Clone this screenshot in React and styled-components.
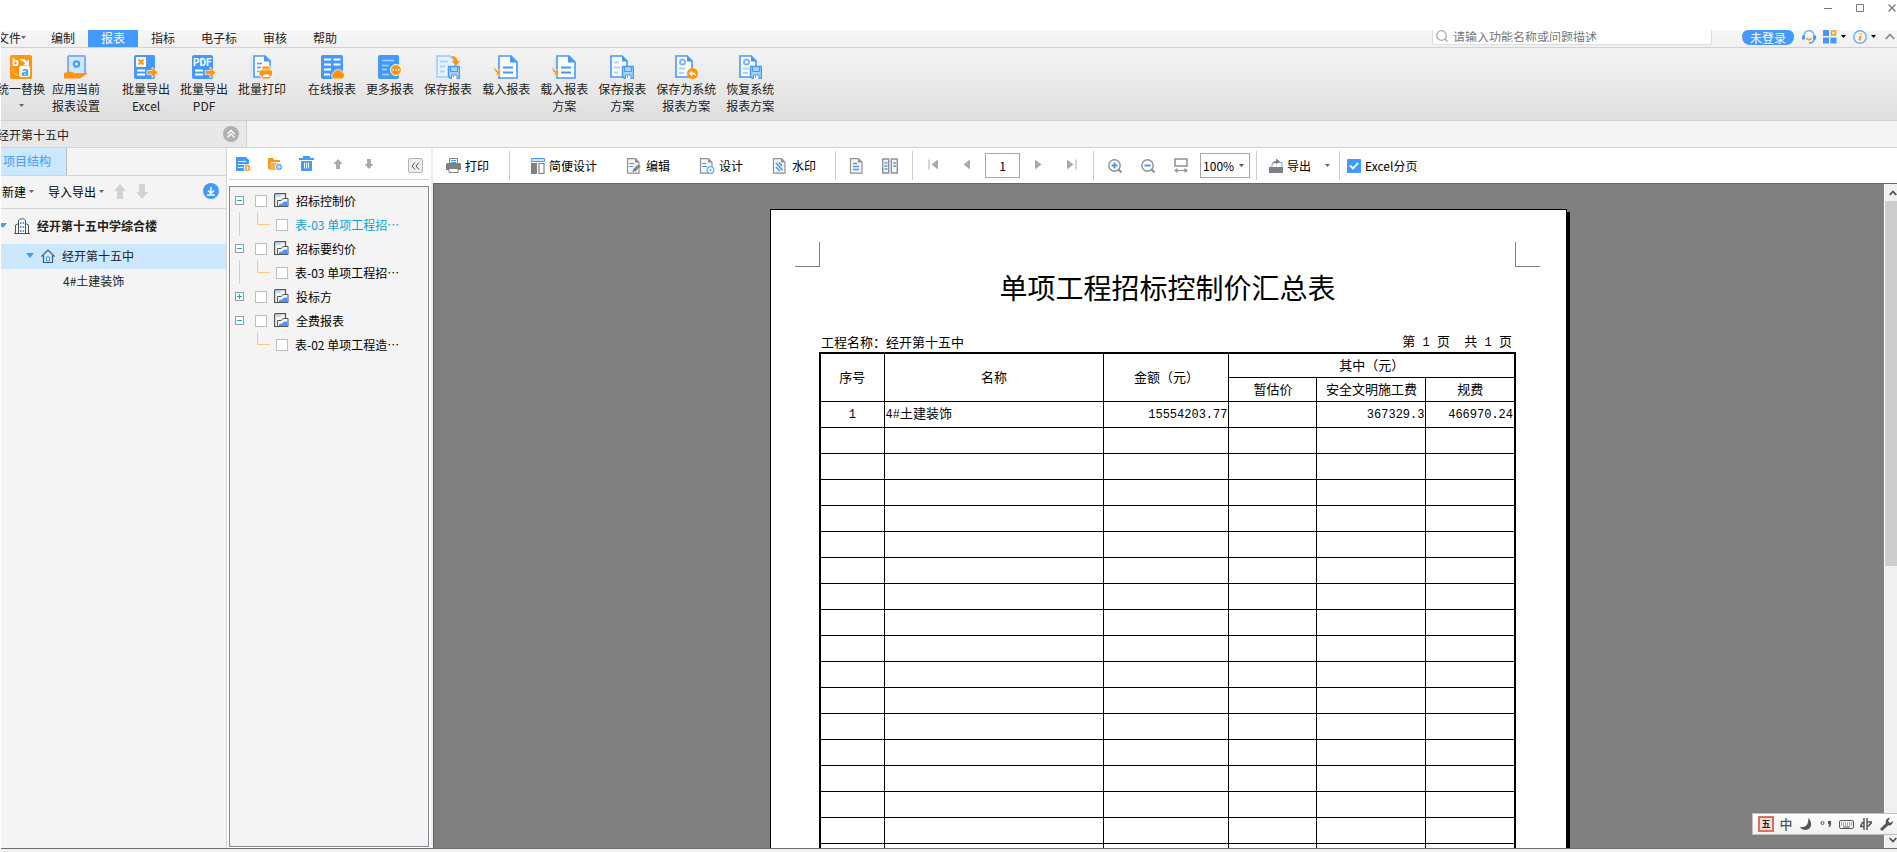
import React from "react";
import styled, { createGlobalStyle } from "styled-components";

const blue = "#4499ff";
const orange = "#ff9511";
const sky = "#a8d4ff";
const grey = "#808080";

const GlobalStyle = createGlobalStyle`
  * {
    box-sizing: border-box;
  }
  body {
    margin: 0;
    overflow: hidden;
    background: #fff;
  }
  body, button, input, select {
    font-family: "Noto Sans CJK SC", "Liberation Sans", sans-serif;
    font-size: 12px;
    color: #222;
  }
  button {
    padding: 0;
    border: 0;
    background: none;
    cursor: pointer;
  }
  svg {
    display: block;
    flex: none;
  }
`;

const Window = styled.div`
  height: 100vh;
  display: flex;
  flex-direction: column;
  padding-left: 1px;
  overflow: hidden;
  line-height: 17px;
`;

const TitleBar = styled.header`
  flex: none;
  height: 30px;
  display: flex;
  justify-content: flex-end;
  align-items: flex-start;
  gap: 24px;
  padding-top: 4px;
`;

const MenuBar = styled.nav`
  flex: none;
  height: 18px;
  display: flex;
  background: linear-gradient(#f8f8f8, #f0f0f0);
  border-bottom: 1px solid #d2d2d2;
  overflow: hidden;
`;

const MenuItem = styled.button`
  height: 17px;
  padding: 0 13px 2px;
  line-height: 15px;
  white-space: nowrap;
  display: flex;
  align-items: center;
  color: ${({ $active }) => ($active ? "#fff" : "#222")};
  background: ${({ $active }) => ($active ? blue : "transparent")};

  &:first-child {
    margin-left: -17px;
    padding-right: 12px;
  }
`;

const MenuTools = styled.div`
  margin-left: auto;
  display: flex;
  align-items: center;
  height: 15px;
  padding-right: 2px;
`;

const SearchBox = styled.label`
  width: 280px;
  height: 15px;
  display: flex;
  align-items: flex-start;
  gap: 5px;
  padding-left: 3px;
  margin-right: 30px;
  background: #fff;
  border: 1px solid #ddd;
  border-top: 0;
  border-radius: 0 0 3px 3px;
`;

const SearchInput = styled.input`
  flex: 1;
  min-width: 0;
  height: 12px;
  padding: 0;
  border: 0;
  outline: 0;
  background: transparent;

  &::placeholder {
    color: #777;
    opacity: 1;
  }
`;

const LoginButton = styled.button`
  width: 52px;
  height: 15px;
  line-height: 13px;
  margin-right: 8px;
  color: #fff;
  background: ${blue};
  border-radius: 6px 6px 8px 8px;
`;

const StatusButton = styled.button`
  display: flex;
  align-items: center;
  gap: 4px;
  margin-right: ${({ $gap }) => $gap}px;
  padding-bottom: 2px;
`;

const Ribbon = styled.div`
  flex: none;
  height: 73px;
  display: flex;
  gap: 22px;
  background: linear-gradient(#f4f4f4, #dfdfdf);
  border-bottom: 1px solid #cecece;
`;

const RibbonGroup = styled.div`
  display: flex;
  gap: 10px;

  &:first-child {
    gap: 7px;
    margin-left: -4px;
  }
`;

const RibbonItem = styled.button`
  display: flex;
  flex-direction: column;
  align-items: center;
  padding-top: 7px;
  white-space: nowrap;

  span {
    margin-top: 1px;
    line-height: 17px;
  }
  svg + span + svg {
    margin-top: 7px;
  }
`;

const DocBar = styled.div`
  flex: none;
  height: 27px;
  background: #f4f4f4;
  border-bottom: 1px solid #d4d4d4;
`;

const DocTab = styled.div`
  width: 246px;
  height: 26px;
  display: flex;
  align-items: center;
  justify-content: space-between;
  padding-right: 7px;
  background: #e8e8e8;
  border-right: 1px solid #d4d4d4;

  span {
    margin-left: -4px;
  }
`;

const Body = styled.main`
  flex: 1;
  min-height: 0;
  display: flex;
  border-bottom: 1px solid #707070;
`;

const Footer = styled.footer`
  flex: none;
  height: 3px;
  background: #f0f0f0;
`;

const ProjectPanel = styled.aside`
  flex: none;
  width: 226px;
  overflow: hidden;
  background: #f4f4f4;
  border-right: 1px solid #d4d4d4;
`;

const PanelTabs = styled.div`
  height: 28px;
  display: flex;
  border-bottom: 1px solid #d4d4d4;
`;

const PanelTab = styled.button`
  width: 66px;
  padding: 0 15px 2px 2px;
  color: ${blue};
  background: #cce8ff;
  border-right: 1px solid #bbb;
`;

const PanelTools = styled.div`
  height: 33px;
  display: flex;
  align-items: center;
  padding: 0 7px 2px 1px;
  border-bottom: 1px solid #d4d4d4;
`;

const DropButton = styled.button`
  display: flex;
  align-items: center;
  gap: 3px;
  margin-right: ${({ $gap }) => $gap || 0}px;
  color: #000;
`;

const PlainButton = styled.button`
  display: flex;
  margin-left: ${({ $push }) => ($push ? "auto" : "0")};
`;

const ProjectTree = styled.ul`
  list-style: none;
  margin: 0;
  padding: 0;
`;

const ProjectRow = styled.li`
  height: ${({ $root }) => ($root ? 35 : 25)}px;
  display: flex;
  align-items: center;
  gap: 7px;
  margin-left: ${({ $root }) => ($root ? -2 : 0)}px;
  padding: 0 0 2px ${({ $indent }) => $indent}px;
  font-weight: ${({ $root }) => ($root ? "bold" : "normal")};
  background: ${({ $active }) => ($active ? "#cce8ff" : "transparent")};
`;

const ReportPanel = styled.aside`
  flex: none;
  width: 204px;
  display: flex;
  flex-direction: column;
  padding: 0 2px 1px 2px;
  background: #fff;
`;

const ReportTools = styled.div`
  flex: none;
  height: 32px;
  display: flex;
  align-items: center;
  padding: 0 6px 0 7px;
  border-bottom: 1px solid #d4d4d4;
`;

const ReportToolSet = styled.div`
  flex: 1;
  display: flex;
  align-items: center;
  gap: 16px;
`;

const CollapseButton = styled.button`
  width: 15px;
  height: 15px;
  display: flex;
  align-items: center;
  justify-content: center;
  margin-top: 4px;
  background: #eee;
  border: 1px solid #b4b4b4;
  border-radius: 2px;
`;

const ReportTree = styled.ul`
  flex: 1;
  list-style: none;
  margin: 6px 0 0;
  padding: 1px 0 0 5px;
  color: #000;
  background: #f4f4f4;
  border: 1px solid #83878f;
`;

const ReportRow = styled.li`
  height: 24px;
  display: flex;
  align-items: center;

  label {
    display: flex;
    align-items: center;
    white-space: nowrap;
    gap: 7px;
    color: ${({ $active }) => ($active ? "#0aa2dc" : "#000")};
  }
  label input {
    margin: 2px 0 0;
  }
`;

const Expander = styled.button`
  width: 9px;
  height: 9px;
  margin: 0 11px 0 0;
  border: 1px solid #999;
  background: #fff;
`;

const TickBox = styled.input.attrs({ type: "checkbox" })`
  appearance: none;
  flex: none;
  width: 12px;
  height: 12px;
  background: #fff;
  border: 1px solid #bdbdbd;
`;

const Viewer = styled.section`
  flex: 1;
  min-width: 0;
  display: flex;
  flex-direction: column;
  border-left: 2px solid #ececec;
`;

const Toolbar = styled.div`
  flex: none;
  height: 35px;
  display: flex;
  align-items: center;
  background: #fff;
  white-space: nowrap;
`;

const ToolGroup = styled.div`
  height: 29px;
  display: flex;
  align-items: center;
  gap: ${({ $gap }) => $gap || 0}px;
  padding: 0 ${({ $right }) => $right}px 0 ${({ $left }) => $left}px;

  & + & {
    border-left: 1px solid #ccc;
  }
`;

const PageSteps = styled.div`
  display: flex;
  align-items: center;
  gap: 25px;
  padding-bottom: 2px;
`;

const ToolButton = styled.button`
  display: flex;
  align-items: center;
  gap: ${({ $gap }) => $gap || 4}px;
  color: #000;
`;

const PageInput = styled.input`
  width: 35px;
  height: 25px;
  padding: 0;
  text-align: center;
  color: #000;
  border: 1px solid #a8a8a8;
`;

const ZoomField = styled.div`
  position: relative;

  svg {
    position: absolute;
    right: 6px;
    top: 11px;
    pointer-events: none;
  }
`;

const ZoomSelect = styled.select`
  appearance: none;
  width: 50px;
  height: 25px;
  padding: 0 0 0 2px;
  color: #000;
  background: #fff;
  border: 1px solid #a8a8a8;
`;

const ExcelCheck = styled.label`
  display: flex;
  align-items: center;
  gap: 4px;
  color: #000;
`;

const ExcelTick = styled.span`
  display: grid;

  input,
  svg {
    grid-area: 1 / 1;
  }
  input {
    appearance: none;
    width: 14px;
    height: 14px;
    margin: 0;
    border-radius: 1px;
    background: ${blue};
  }
  svg {
    pointer-events: none;
  }
`;

const Canvas = styled.div`
  flex: 1;
  min-height: 0;
  display: flex;
  background: ${grey};
  border-top: 1px solid #666;
  border-left: 1px solid #666;
`;

const PageArea = styled.div`
  flex: 1;
  min-width: 0;
  display: flex;
  justify-content: center;
  align-items: flex-start;
  padding: 25px 0 0 19px;
  overflow: hidden;
`;

const Page = styled.article`
  width: 797px;
  min-height: 1123px;
  padding-top: 32px;
  color: #000;
  background: #fff;
  border: 1px solid #000;
  box-shadow: 3px 3px 0 #000;
`;

const CropMarks = styled.div`
  display: flex;
  justify-content: space-between;
  padding: 0 26px 0 24px;
`;

const CropMark = styled.span`
  width: 25px;
  height: 25px;
  border-bottom: 1px solid ${grey};
  border-right: ${({ $side }) => ($side === "left" ? `1px solid ${grey}` : "0")};
  border-left: ${({ $side }) => ($side === "right" ? `1px solid ${grey}` : "0")};
`;

const Sheet = styled.div`
  padding: 0 50px 0 48px;
  font-size: 13px;
`;

const SheetTitle = styled.h1`
  margin: 0 0 24px;
  text-align: center;
  font-size: 28px;
  line-height: 40px;
  font-weight: 400;
`;

const SheetInfo = styled.div`
  height: 21px;
  display: flex;
  justify-content: space-between;
  align-items: center;
  padding: 0 4px 0 2px;
`;

const Num = styled.span`
  font-family: "Liberation Mono", monospace;
  font-size: 12px;
  white-space: pre;
`;

const SummaryTable = styled.table`
  width: 100%;
  table-layout: fixed;
  border-collapse: collapse;
  border: 2px solid #000;
  line-height: 18px;

  th,
  td {
    padding: 0 1px;
    border: 1px solid #000;
    font-weight: 400;
    white-space: nowrap;
  }
  thead tr {
    height: 24px;
  }
  tbody tr {
    height: 26px;
  }
`;

const Cell = styled.td`
  text-align: ${({ $align }) => $align || "left"};
`;

const Col = styled.col`
  width: ${({ $width }) => $width}px;
`;

const ScrollBar = styled.div`
  flex: none;
  width: 13px;
  display: flex;
  flex-direction: column;
  background: #f0f0f0;
  border-left: 1px solid #fff;
`;

const ScrollButton = styled.button`
  flex: none;
  height: 17px;
  display: flex;
  align-items: center;
  justify-content: center;
  padding-left: 3px;
`;

const ScrollTrack = styled.div`
  flex: 1;
`;

const ScrollThumb = styled.div`
  height: 58%;
  background: #cdcdcd;
`;

const ImeBar = styled.div`
  position: absolute;
  right: 0;
  bottom: 17px;
  width: 145px;
  height: 22px;
  display: flex;
  align-items: center;
  justify-content: space-between;
  padding: 0 3px 0 5px;
  background: linear-gradient(#fff, #f0f0f2);
  border: 1px solid #c0bcbc;
  border-right: 0;
`;

const ImeKey = styled.button`
  width: 16px;
  display: flex;
  justify-content: center;
  color: #555;
  font-size: 13px;
  font-weight: 500;
  line-height: 18px;
`;

const ImeBadge = styled(ImeKey)`
  height: 16px;
  align-items: center;
  line-height: 10px;
  font-size: 9px;
  font-weight: bold;
  color: #222;
  background: #f3dcd8;
  border: 2px double #d9705f;
`;

const Caret = ({ color = "#666" }) => (
  <svg width="5" height="3" viewBox="0 0 5 3">
    <path d="M0 0h5L2.5 3z" fill={color} />
  </svg>
);

const Icon = ({ w = 16, h = w, children }) => (
  <svg width={w} height={h} viewBox={`0 0 ${w} ${h}`} fill="none">
    {children}
  </svg>
);

/* ribbon icons, all on a 24px grid */

const Floppy = () => (
  <>
    <path d="M12.5 11.5h11v12h-9l-2-2z" fill={sky} stroke={blue} strokeWidth="1.5" />
    <path d="M14.5 11.5v5h7v-5" stroke={blue} />
    <path d="M15.500 24v-4h5.500v4" fill="#fff" stroke={blue} />
    <path d="M17.500 20.500v2" stroke={blue} />
  </>
);

const ReplaceIcon = () => (
  <Icon w={24}>
    <rect x="1" width="22" height="24" rx="2" fill={orange} />
    <text x="3" y="11" fontSize="11" fontWeight="bold" fill="#fff" fontFamily="Open Sans">b</text>
    <path d="M10 4.500c3-1.500 6-.5 8 2l2-2v6h-6l2-2c-1-2-3-3-6-4z" fill="#fff" />
    <rect x="10" y="11" width="11" height="11" rx="2" fill="#fff" />
    <text x="12" y="21" fontSize="13" fontWeight="bold" fill={blue} fontFamily="Open Sans">a</text>
    <path d="M4 14c0 4 1 5 5 6" stroke="#ffc880" />
  </Icon>
);

const ApplyIcon = () => (
  <Icon w={24}>
    <rect x="4" y="1" width="17" height="18" rx="1" fill="#cfe7ff" stroke="#73b4ff" strokeWidth="2" />
    <circle cx="12.500" cy="9" r="2.700" stroke={blue} strokeWidth="2" />
    <path d="M0 18l5-1.500 4 .5 1.500 2h4l1 .8 7-2 1 1-7.500 4.700H0z" fill={orange} />
  </Icon>
);

const ExportIcon = ({ label }) => (
  <Icon w={24}>
    <rect width="21" height="24" rx="2" fill={blue} />
    {label ? (
      <text x="1" y="11" fontSize="10" fontWeight="bold" fill="#fff" fontFamily="Roboto">PDF</text>
    ) : (
      <>
        <rect x="2" y="2" width="10" height="10" rx="1" fill="#fff" />
        <path d="M4.500 4.500l5 5M9.500 4.500l-5 5" stroke={orange} strokeWidth="2" />
      </>
    )}
    <path d="M3 15.500h8M3 19.500h8" stroke="#fff" strokeWidth="2" />
    <path d="M13 15.500h5V12l6 5.500-6 5.500v-3.500h-5z" fill={orange} stroke="#fff" strokeWidth=".6" />
  </Icon>
);

const BatchPrintIcon = () => (
  <Icon w={24}>
    <path d="M1 2v20h3" stroke="#d6eaff" strokeWidth="2" />
    <path d="M4 1h11l5 5v16H4z" fill="#fff" stroke={blue} strokeWidth="1.600" />
    <path d="M14 .5v6h6z" fill={blue} />
    <path d="M7 8.500h5M7 12.500h4M7 16.500h3" stroke={blue} strokeWidth="1.600" />
    <path d="M12 11h8v4h2.500v6H20v3h-8v-3H9v-6h3z" fill={orange} stroke="#fff" strokeWidth=".8" />
    <path d="M13 13.500h6v2h-6z" fill="#ffca86" />
    <path d="M13 19.500h6v2.500h-6z" fill="#fff" />
  </Icon>
);

const OnlineIcon = () => (
  <Icon w={24}>
    <rect x="1" width="22" height="24" rx="2" fill={blue} />
    <path d="M4 4.500h7M13.500 4.500h7M4 9.500h7M13.500 9.500h7M4 14.500h7M4 19.500h6" stroke="#fff" strokeWidth="2" />
    <path d="M14 24a3.500 3.500 0 0 1-.5-6.500 5 5 0 0 1 8.500-1 4 4 0 0 1 0 7.500z" fill={orange} stroke="#fff" strokeWidth=".8" />
  </Icon>
);

const MoreIcon = () => (
  <Icon w={24}>
    <rect width="21" height="24" rx="2" fill={blue} />
    <path d="M4 5.500h12M4 10.500h7M4 14.500h5M4 19.500h7" stroke="#a8d4ff" strokeWidth="1.600" />
    <circle cx="18" cy="15" r="5.500" fill={orange} stroke="#fff" />
    <path d="M14.500 15h1.500M17.300 15h1.500M20 15h1.500" stroke="#fff" strokeWidth="1.600" />
  </Icon>
);

const SaveIcon = () => (
  <Icon w={24}>
    <path d="M1 1h13l5 5v16H1z" fill="#e6f3ff" stroke={sky} strokeWidth="2" />
    <path d="M4 6.500h8M4 11.500h5M4 16.500h5" stroke={sky} strokeWidth="2" />
    <path d="M15 1c4 0 6 1 6.500 5H24l-4 5-4.500-5H18c0-2-1-3-3-5z" fill={orange} />
    <Floppy />
  </Icon>
);

const LoadIcon = ({ pale }) => (
  <Icon w={24}>
    {pale && <path d="M1 2h5v20H2V2" fill="#d6eaff" />}
    <path d="M5 1h12l6 6v16H5z" fill="#fff" stroke={blue} strokeWidth="1.600" />
    <path d="M16 .5v7h7z" fill={blue} />
    <path d="M9 12.500h10M9 17.500h10" stroke={blue} strokeWidth="1.800" />
    <path d="M.5 10c0 3 1.500 5 4 6l2-2.500V20H1l2-2C0 16.500-.5 13 .5 10z" fill={orange} stroke="#fff" strokeWidth=".6" />
  </Icon>
);

const SavePlanIcon = () => (
  <Icon w={24}>
    <path d="M1 1h11l5 5v16H1z" fill="#fff" stroke={blue} strokeWidth="1.600" />
    <path d="M12 .5v6h6z" fill={blue} />
    <path d="M4 7.500h5M4 12.500h6M4 17.500h4" stroke={sky} strokeWidth="2" />
    <Floppy />
  </Icon>
);

const SystemIcon = ({ restore }) => (
  <Icon w={24}>
    <path d="M2 1h11l5 5v16H2z" fill="#fff" stroke={blue} strokeWidth="1.600" />
    <path d="M13 .5v6h6z" fill={blue} />
    <circle cx="8.500" cy="7" r="2.500" stroke="#79b7ff" strokeWidth="2" />
    <path d="M5 13.500h6M5 18h5" stroke={sky} strokeWidth="2" />
    {restore ? (
      <Floppy />
    ) : (
      <>
        <circle cx="18.500" cy="18.500" r="5.500" fill={orange} />
        <path d="M14.500 18.500l3.500-3v2c3 0 4 1.500 4 4-1-1.500-2-2-4-2v2z" fill="#fff" />
      </>
    )}
  </Icon>
);

/* panel and toolbar icons */

const PrinterIcon = () => (
  <Icon w={15} h={16}>
    <path d="M3.500 5V.5h8V5" fill="#fff" stroke={grey} />
    <path d="M5 2.500h5M5 4.500h5" stroke={blue} />
    <path d="M1 5h13l1 1v6H0V6z" fill={grey} />
    <path d="M3 10.500h9v4H3z" fill="#fff" stroke={grey} />
  </Icon>
);

const SimpleDesignIcon = () => (
  <Icon w={14} h={16}>
    <path d="M.5.5h13v3H.5z" fill="#cfe7ff" stroke={blue} />
    <path d="M0 5h6v11H0z" fill={grey} />
    <path d="M8 5.500h5v10H8z" stroke={grey} strokeWidth="1.200" />
  </Icon>
);

const PaperIcon = ({ kind }) => (
  <Icon w={16}>
    <path d="M1.500.7h8l3.500 3.500v11H1.500z" fill="#f7f7f7" stroke="#909090" strokeWidth="1.200" />
    <path d="M9 .5v4h4z" fill="#909090" />
    {kind === "edit" && (
      <>
        <path d="M3 5.500h5M3 8.500h4" stroke={blue} />
        <path d="M6 14.500l1-3.500 5.500-5 2.500 2.500-5.500 5z" fill={grey} stroke="#fff" strokeWidth=".5" />
      </>
    )}
    {kind === "design" && (
      <>
        <path d="M3 5.500h4M3 8.500h5" stroke={blue} />
        <circle cx="11.500" cy="12" r="3.300" fill="#fff" stroke="#66adff" strokeWidth="1.300" />
        <circle cx="11.500" cy="12" r="1" fill={blue} />
      </>
    )}
    {kind === "mark" && (
      <path d="M4 5l6.500 7M7 4.500l3 3.500M4 9l4 4" stroke={blue} strokeWidth="1.600" />
    )}
    {kind === "text" && <path d="M4 5.500h4M4 8.500h6M4 11.500h6" stroke={blue} strokeWidth="1.500" />}
  </Icon>
);

const TwoPageIcon = () => (
  <Icon w={16}>
    <path d="M.7 1h6v14h-6zM9.300 1h6v14h-6z" fill="#f7f7f7" stroke="#909090" strokeWidth="1.400" />
    <path d="M2.500 5h3M2.500 8h3M2.500 11h3M11 5h3M11 8h3" stroke={blue} strokeWidth="1.300" />
  </Icon>
);

const StepIcon = ({ back, end }) => (
  <svg width={end ? 10 : 7} height="11" viewBox={end ? "0 0 10 11" : "0 0 7 11"}>
    <g transform={back ? `translate(${end ? 10 : 7} 0) scale(-1 1)` : undefined} fill="#aaa">
      <path d="M0 .5l6.500 5L0 10.500z" />
      {end && <path d="M8.500.5h1v10h-1z" />}
    </g>
  </svg>
);

const ZoomIcon = ({ plus }) => (
  <Icon w={14}>
    <circle cx="6.500" cy="6.500" r="5.700" stroke="#909090" strokeWidth="1.400" />
    <path d="M10.500 10.500l3 3" stroke="#909090" strokeWidth="2" />
    <path d={plus ? "M3.500 6.500h6M6.500 3.500v6" : "M3.500 6.500h6"} stroke={blue} strokeWidth="2" />
  </Icon>
);

const FitWidthIcon = () => (
  <Icon w={14} h={15}>
    <path d="M1 1h12v7H1z" stroke="#909090" strokeWidth="1.500" />
    <path d="M0 12.500l3.500-2.500v2h7v-2l3.500 2.500-3.500 2.500v-2h-7v2z" fill="#909090" />
  </Icon>
);

const ExportTrayIcon = () => (
  <Icon w={14} h={15}>
    <path d="M9 4.500h4v5H3V6" stroke="#66adff" />
    <path d="M0 9h14v6H0z" fill={grey} />
    <path d="M3 7c0-3 2-4 4-4V.5l4 3-4 3V5C5 5 4 5.500 3 7z" fill={grey} />
  </Icon>
);

const FolderIcon = () => (
  <Icon w={15} h={14}>
    <path d="M11.500 5V.6H1.500L.6 1.500v12h12" stroke="#555" strokeWidth="1.200" />
    <path d="M2.500 2h4v2h-4z" fill={sky} />
    <path d="M3.500 13.500V7.500h4L9 5.500h5v8H.6" fill="#fff" stroke="#555" />
    <path d="M5 13v-2l3-.5L10 8.500h3.500V13z" fill={blue} />
  </Icon>
);

const NewReportIcon = () => (
  <Icon w={16}>
    <path d="M0 1h10l3 3v11H0z" fill={blue} />
    <path d="M2 5.500h8M2 8.500h7M2 11.500h5" stroke="#fff" />
    <circle cx="11.500" cy="12" r="3.500" fill={orange} stroke="#fff" />
    <path d="M9.500 12h4M11.500 10v4" stroke="#fff" />
  </Icon>
);

const NewFolderIcon = () => (
  <Icon w={15} h={14}>
    <path d="M0 1h5l1 2h6v2H3l-1 7H0z" fill={orange} />
    <path d="M3 6h10l-1 7H1z" fill="#ffb04a" />
    <circle cx="11" cy="10" r="3.500" fill={blue} stroke="#fff" />
    <path d="M9 10h4M11 8v4" stroke="#fff" />
  </Icon>
);

const TrashIcon = () => (
  <Icon w={15} h={16}>
    <path d="M0 2h4V0h7v2h4v2H0zM2 5h11v10H2z" fill={blue} />
    <path d="M5.500 6.500v6M7.500 6.500v6M9.500 6.500v6" stroke="#fff" strokeWidth=".9" />
  </Icon>
);

const BuildingIcon = () => (
  <Icon w={16}>
    <path d="M1.500 15V7l3-1.500M14.500 15V7l-3-1.500M0 15.500h16" stroke="#555" />
    <path d="M4.500 15V2.500L7 .8h2.500l2 1.700V15" fill="#fff" stroke="#555" />
    <path d="M6 4h1.500v2H6zM8.700 4h1.500v2H8.700zM6 8h1.500v2H6zM8.700 8h1.500v2H8.700zM6 12h1.500v2H6zM8.700 12h1.500v2H8.700z" fill={blue} />
  </Icon>
);

const HouseIcon = () => (
  <Icon w={14}>
    <path d="M.5 7.500L7 1l6.500 6.500M2.500 6.500v7h9v-7" stroke="#3f5a73" strokeWidth="1.200" />
    <path d="M5.500 8h3v4h-3z" fill="#e8f4ff" stroke={blue} />
  </Icon>
);

const TreeArrow = () => (
  <Icon w={8} h={5}>
    <path d="M0 0h8L4 5z" fill={blue} />
  </Icon>
);

const ribbonGroups = [
  [
    { icon: <ReplaceIcon />, lines: ["统一替换"], drop: true },
    { icon: <ApplyIcon />, lines: ["应用当前", "报表设置"] },
  ],
  [
    { icon: <ExportIcon />, lines: ["批量导出", "Excel"] },
    { icon: <ExportIcon label="PDF" />, lines: ["批量导出", "PDF"] },
    { icon: <BatchPrintIcon />, lines: ["批量打印"] },
  ],
  [
    { icon: <OnlineIcon />, lines: ["在线报表"] },
    { icon: <MoreIcon />, lines: ["更多报表"] },
    { icon: <SaveIcon />, lines: ["保存报表"] },
    { icon: <LoadIcon />, lines: ["载入报表"] },
    { icon: <LoadIcon pale />, lines: ["载入报表", "方案"] },
    { icon: <SavePlanIcon />, lines: ["保存报表", "方案"] },
    { icon: <SystemIcon />, lines: ["保存为系统", "报表方案"] },
    { icon: <SystemIcon restore />, lines: ["恢复系统", "报表方案"] },
  ],
];

const menus = ["编制", "报表", "指标", "电子标", "审核", "帮助"];

const reports = [
  { name: "招标控制价", open: true, child: "表-03 单项工程招…", active: true, more: true },
  { name: "招标要约价", open: true, child: "表-03 单项工程招…", more: true },
  { name: "投标方", open: false },
  { name: "全费报表", open: true, child: "表-02 单项工程造…" },
];

const emptyRows = Array.from({ length: 22 }, (_, i) => i);

const MenuSection = () => (
  <MenuBar>
    <MenuItem>
      文件
      <Caret />
    </MenuItem>
    {menus.map((name) => (
      <MenuItem key={name} $active={name === "报表"}>
        {name}
      </MenuItem>
    ))}
    <MenuTools>
      <SearchBox>
        <Icon w={12}>
          <circle cx="5.500" cy="5.500" r="4.800" stroke="#aaa" strokeWidth="1.300" />
          <path d="M9 9l2.500 2.500" stroke="#aaa" strokeWidth="1.500" />
        </Icon>
        <SearchInput aria-label="搜索" placeholder="请输入功能名称或问题描述" />
      </SearchBox>
      <LoginButton>未登录</LoginButton>
      <StatusButton $gap={7} aria-label="客服">
        <Icon w={14}>
          <path d="M2 7V5.500C3-.8 11-.8 12 5.500V7" stroke="#73b4ff" strokeWidth="1.500" />
          <path d="M0 5.500h3v4H0zM11 5.500h3v4h-3z" fill={blue} />
          <path d="M4.500 8c1 2.500 4 2.500 5 0" stroke={orange} strokeWidth="1.600" />
          <path d="M12 9c0 3-2 4-5 4" stroke={blue} strokeWidth="1.500" />
        </Icon>
      </StatusButton>
      <StatusButton $gap={7} aria-label="应用">
        <Icon w={14}>
          <path d="M0 0h6v6H0zM0 7.500h6v6H0zM7.500 7.500h6v6h-6z" fill={blue} />
          <path d="M8.500 1h4v4h-4z" stroke={orange} strokeWidth="1.500" />
        </Icon>
        <Caret color="#000" />
      </StatusButton>
      <StatusButton $gap={9} aria-label="帮助">
        <Icon w={14}>
          <circle cx="7" cy="7" r="6.200" stroke="#66adff" strokeWidth="1.400" />
          <path d="M7.500 6l-1 4.500M7.900 3.300l-.2 1.200" stroke={orange} strokeWidth="2" />
        </Icon>
        <Caret color="#000" />
      </StatusButton>
      <StatusButton $gap={0} aria-label="收起">
        <Icon w={10} h={7}>
          <path d="M.7 6L5 1.500 9.300 6" stroke="#888" strokeWidth="1.800" />
        </Icon>
      </StatusButton>
    </MenuTools>
  </MenuBar>
);

const ProjectSection = () => (
  <ProjectPanel>
    <PanelTabs>
      <PanelTab>项目结构</PanelTab>
    </PanelTabs>
    <PanelTools>
      <DropButton $gap={14}>
        新建
        <Caret />
      </DropButton>
      <DropButton $gap={10}>
        导入导出
        <Caret />
      </DropButton>
      <DropButton $gap={10} aria-label="上移">
        <Icon w={12} h={15}>
          <path d="M6 0l6 7H9v8H3V7H0z" fill="#d2d2d2" />
        </Icon>
      </DropButton>
      <DropButton aria-label="下移">
        <Icon w={12} h={15}>
          <path d="M3 0h6v8h3l-6 7-6-7h3z" fill="#d2d2d2" />
        </Icon>
      </DropButton>
      <PlainButton $push aria-label="下载">
        <Icon w={16}>
          <circle cx="8" cy="8" r="8" fill={blue} />
          <path d="M8 4v6M5 7.500l3 3 3-3M4 12h8" stroke="#fff" strokeWidth="1.400" />
        </Icon>
      </PlainButton>
    </PanelTools>
    <ProjectTree>
      <ProjectRow $root $indent={0}>
        <TreeArrow />
        <BuildingIcon />
        经开第十五中学综合楼
      </ProjectRow>
      <ProjectRow $active $indent={25}>
        <TreeArrow />
        <HouseIcon />
        经开第十五中
      </ProjectRow>
      <ProjectRow $indent={62}>4#土建装饰</ProjectRow>
    </ProjectTree>
  </ProjectPanel>
);

const ReportSection = () => (
  <ReportPanel>
    <ReportTools>
      <ReportToolSet>
        <PlainButton aria-label="新建报表">
          <NewReportIcon />
        </PlainButton>
        <PlainButton aria-label="新建文件夹">
          <NewFolderIcon />
        </PlainButton>
        <PlainButton aria-label="删除">
          <TrashIcon />
        </PlainButton>
        <PlainButton aria-label="上移">
          <Icon w={15} h={10}>
            <path d="M8 0l4.500 5H10v5H6V5H3.500z" fill="#aaa" />
          </Icon>
        </PlainButton>
        <PlainButton aria-label="下移">
          <Icon w={15} h={10}>
            <path d="M6 0h4v5h2.500L8 10 3.500 5H6z" fill="#aaa" />
          </Icon>
        </PlainButton>
      </ReportToolSet>
      <CollapseButton aria-label="折叠">
        <Icon w={9} h={8}>
          <path d="M4 .5L1 4l3 3.500M8 .5L5 4l3 3.500" stroke="#555" />
        </Icon>
      </CollapseButton>
    </ReportTools>
    <ReportTree>
      {reports.map((group) => (
        <React.Fragment key={group.name}>
          <ReportRow>
            <Expander aria-label={group.open ? "收起" : "展开"}>
              <Icon w={7}>
                <path d={group.open ? "M1 3.500h5" : "M1 3.500h5M3.500 1v5"} stroke="#1aa5d8" />
              </Icon>
            </Expander>
            <label>
              <TickBox />
              <FolderIcon />
              {group.name}
            </label>
          </ReportRow>
          {group.child && (
            <ReportRow $active={group.active}>
              <Icon w={41} h={24}>
                {group.more && <path d="M4.500 0v24" stroke="#ffc880" />}
                <path d="M22.500 0v12.500H35" stroke="#ffc880" />
              </Icon>
              <label>
                <TickBox />
                {group.child}
              </label>
            </ReportRow>
          )}
        </React.Fragment>
      ))}
    </ReportTree>
  </ReportPanel>
);

const ViewerToolbar = () => (
  <Toolbar>
    <ToolGroup $left={13} $right={20}>
      <ToolButton>
        <PrinterIcon />
        打印
      </ToolButton>
    </ToolGroup>
    <ToolGroup $left={21} $right={19} $gap={29}>
      <ToolButton>
        <SimpleDesignIcon />
        简便设计
      </ToolButton>
      <ToolButton>
        <PaperIcon kind="edit" />
        编辑
      </ToolButton>
      <ToolButton>
        <PaperIcon kind="design" />
        设计
      </ToolButton>
      <ToolButton>
        <PaperIcon kind="mark" />
        水印
      </ToolButton>
    </ToolGroup>
    <ToolGroup $left={13} $right={14} $gap={17}>
      <ToolButton aria-label="单页">
        <PaperIcon kind="text" />
      </ToolButton>
      <ToolButton aria-label="双页">
        <TwoPageIcon />
      </ToolButton>
    </ToolGroup>
    <ToolGroup $left={15} $right={16} $gap={15}>
      <PageSteps>
        <ToolButton aria-label="首页">
          <StepIcon back end />
        </ToolButton>
        <ToolButton aria-label="上一页">
          <StepIcon back />
        </ToolButton>
      </PageSteps>
      <PageInput aria-label="页码" defaultValue="1" />
      <PageSteps>
        <ToolButton aria-label="下一页">
          <StepIcon />
        </ToolButton>
        <ToolButton aria-label="末页">
          <StepIcon end />
        </ToolButton>
      </PageSteps>
    </ToolGroup>
    <ToolGroup $left={14} $right={6} $gap={19}>
      <ToolButton aria-label="放大">
        <ZoomIcon plus />
      </ToolButton>
      <ToolButton aria-label="缩小">
        <ZoomIcon />
      </ToolButton>
      <ToolGroup $left={0} $right={0} $gap={12} as="span">
        <ToolButton aria-label="适合宽度">
          <FitWidthIcon />
        </ToolButton>
        <ZoomField>
          <ZoomSelect aria-label="缩放" defaultValue="100%">
            <option>100%</option>
            <option>150%</option>
          </ZoomSelect>
          <Caret color="#555" />
        </ZoomField>
      </ToolGroup>
    </ToolGroup>
    <ToolGroup $left={12} $right={9} $gap={14}>
      <ToolButton>
        <ExportTrayIcon />
        导出
      </ToolButton>
      <ToolButton aria-label="导出选项">
        <Caret />
      </ToolButton>
    </ToolGroup>
    <ToolGroup $left={7} $right={0}>
      <ExcelCheck>
        <ExcelTick>
          <input type="checkbox" defaultChecked />
          <Icon w={14}>
            <path d="M3 6.500l3 3 5-5.500" stroke="#fff" strokeWidth="1.800" />
          </Icon>
        </ExcelTick>
        Excel分页
      </ExcelCheck>
    </ToolGroup>
  </Toolbar>
);

const ReportSheet = () => (
  <Page>
    <CropMarks>
      <CropMark $side="left" />
      <CropMark $side="right" />
    </CropMarks>
    <Sheet>
      <SheetTitle>单项工程招标控制价汇总表</SheetTitle>
      <SheetInfo>
        <span>工程名称：经开第十五中</span>
        <span>
          第<Num> 1 </Num>页<Num>{"  "}</Num>共<Num> 1 </Num>页
        </span>
      </SheetInfo>
      <SummaryTable>
        <colgroup>
          <Col $width={64} />
          <col />
          <Col $width={125} />
          <Col $width={88} />
          <Col $width={109} />
          <Col $width={89} />
        </colgroup>
        <thead>
          <tr>
            <th rowSpan={2}>序号</th>
            <th rowSpan={2}>名称</th>
            <th rowSpan={2}>金额（元）</th>
            <th colSpan={3}>其中（元）</th>
          </tr>
          <tr>
            <th>暂估价</th>
            <th>安全文明施工费</th>
            <th>规费</th>
          </tr>
        </thead>
        <tbody>
          <tr>
            <Cell $align="center">
              <Num>1</Num>
            </Cell>
            <Cell>
              <Num>4#</Num>土建装饰
            </Cell>
            <Cell $align="right">
              <Num>15554203.77</Num>
            </Cell>
            <Cell />
            <Cell $align="right">
              <Num>367329.3</Num>
            </Cell>
            <Cell $align="right">
              <Num>466970.24</Num>
            </Cell>
          </tr>
          {emptyRows.map((row) => (
            <tr key={row}>
              <Cell />
              <Cell />
              <Cell />
              <Cell />
              <Cell />
              <Cell />
            </tr>
          ))}
        </tbody>
      </SummaryTable>
    </Sheet>
  </Page>
);

const Ime = () => (
  <ImeBar>
    <ImeBadge>五</ImeBadge>
    <ImeKey>中</ImeKey>
    <ImeKey aria-label="半角">
      <Icon w={12}>
        <path d="M8 0c5 4 4 11-2 12-3 0-5-1-6-3 6 1 9-3 8-9z" fill="#555" />
      </Icon>
    </ImeKey>
    <ImeKey aria-label="标点">
      <Icon w={12} h={8}>
        <circle cx="2.500" cy="3" r="1.500" stroke="#555" />
        <path d="M8 1h3v3c0 2-1 3-2.500 3.500L9 4H8z" fill="#555" />
      </Icon>
    </ImeKey>
    <ImeKey aria-label="软键盘">
      <Icon w={15} h={9}>
        <rect x=".5" y=".5" width="14" height="8" rx="1.500" stroke="#555" />
        <path d="M2 3h11M2 5h11" stroke="#555" strokeDasharray="1 1" />
        <path d="M4 7h7" stroke="#555" />
      </Icon>
    </ImeKey>
    <ImeKey aria-label="切换">
      <Icon w={12}>
        <path d="M4 0v8.500H0L3 4v0M4 3v9" stroke="#555" strokeWidth="1.500" />
        <path d="M7 0v12M7 4h5L8 8.500" stroke="#555" strokeWidth="1.500" />
      </Icon>
    </ImeKey>
    <ImeKey aria-label="设置">
      <Icon w={13}>
        <path d="M0 11l6-6C5 2 7 0 10 0L8 3l2 2 3-2c0 3-2 5-5 4.500L2 13z" fill="#555" />
      </Icon>
    </ImeKey>
  </ImeBar>
);

const App = () => (
  <Window lang="zh-CN">
    <GlobalStyle />
    <TitleBar>
      <PlainButton aria-label="最小化">
        <Icon w={8} h={9}>
          <path d="M0 4.500h8" stroke="#777" />
        </Icon>
      </PlainButton>
      <PlainButton aria-label="最大化">
        <Icon w={8}>
          <path d="M.5.5h7v7h-7z" stroke="#777" />
        </Icon>
      </PlainButton>
      <PlainButton aria-label="关闭">
        <Icon w={9} h={8}>
          <path d="M.5.5l7 7M7.500.5l-7 7" stroke="#777" strokeWidth="1.200" />
        </Icon>
      </PlainButton>
    </TitleBar>
    <MenuSection />
    <Ribbon>
      {ribbonGroups.map((group, i) => (
        <RibbonGroup key={i}>
          {group.map((item) => (
            <RibbonItem key={item.lines.join("")}>
              {item.icon}
              <span>
                {item.lines[0]}
                {item.lines[1] && <br />}
                {item.lines[1]}
              </span>
              {item.drop && <Caret />}
            </RibbonItem>
          ))}
        </RibbonGroup>
      ))}
    </Ribbon>
    <DocBar>
      <DocTab>
        <span>经开第十五中</span>
        <PlainButton aria-label="收起">
          <Icon w={16}>
            <circle cx="8" cy="8" r="8" fill="#b0b0b0" />
            <path d="M4.500 8L8 4.500 11.500 8M4.500 11.500L8 8l3.500 3.500" stroke="#fff" strokeWidth="1.300" />
          </Icon>
        </PlainButton>
      </DocTab>
    </DocBar>
    <Body>
      <ProjectSection />
      <ReportSection />
      <Viewer>
        <ViewerToolbar />
        <Canvas>
          <PageArea>
            <ReportSheet />
          </PageArea>
          <ScrollBar>
            <ScrollButton aria-label="向上滚动">
              <Icon w={8} h={6}>
                <path d="M.7 5L4 1.500 7.300 5" stroke="#505050" strokeWidth="1.800" />
              </Icon>
            </ScrollButton>
            <ScrollTrack>
              <ScrollThumb />
            </ScrollTrack>
            <ScrollButton aria-label="向下滚动">
              <Icon w={8} h={6}>
                <path d="M.7 1L4 4.500 7.300 1" stroke="#505050" strokeWidth="1.800" />
              </Icon>
            </ScrollButton>
          </ScrollBar>
        </Canvas>
      </Viewer>
    </Body>
    <Footer />
    <Ime />
  </Window>
);

export default App;
